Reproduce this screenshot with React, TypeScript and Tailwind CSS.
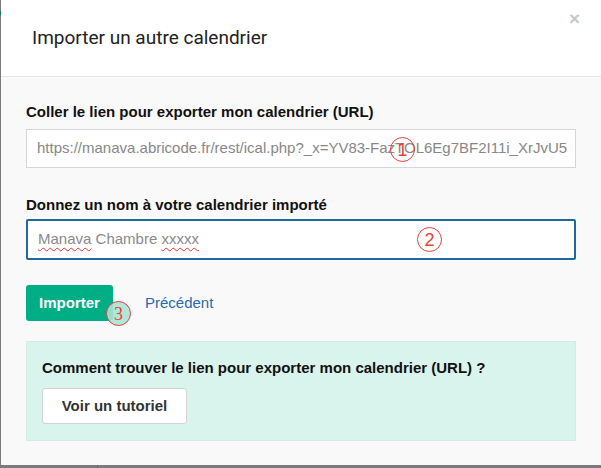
import React from "react";

function Circle({ n, className }: { n: string; className: string }) {
  return (
    <div
      className={`absolute flex h-[25px] w-[25px] items-center justify-center rounded-full border-[1.5px] border-[#e8413c] text-[18px] leading-none text-[#e8413c] ${className}`}
      style={{ fontFamily: '"Liberation Sans", Arial, sans-serif' }}
    >
      {n}
    </div>
  );
}

export default function App() {
  const sans = { fontFamily: '"Liberation Sans", Arial, sans-serif' };
  return (
    <div className="flex h-[468px] w-[601px] flex-col overflow-hidden bg-[#7b7b7b]" style={sans}>
      <div className="flex min-h-0 flex-1">
        <div className="relative w-[1px] bg-[#7b7b7b]">
          <div className="absolute left-0 top-[11px] h-[4px] w-[1px] bg-[#0f7a5a]" />
        </div>
        <div className="flex flex-1 flex-col bg-[#f9f9f9]">
          {/* header */}
          <div className="relative flex h-[77px] items-center border-b border-[#e5e5e5] bg-white pl-[31px]">
            <h1
              className="text-[19px] font-normal text-[#222]"
              style={{ fontFamily: 'Roboto, "Liberation Sans", sans-serif' }}
            >
              Importer un autre calendrier
            </h1>
            <span className="absolute right-[21px] top-[9px] text-[19px] font-bold leading-none text-[#c8c8c8]">
              ×
            </span>
          </div>
          {/* body */}
          <div className="flex flex-col px-[25px] pt-[26px]">
            <label className="text-[15px] font-bold leading-[18px] text-[#111]">
              Coller le lien pour exporter mon calendrier (URL)
            </label>
            <div className="relative mt-[8px] flex h-[39px] items-center overflow-hidden border border-[#d6d6d6] bg-white pl-[10px]">
              <span className="whitespace-nowrap text-[15px] text-[#888]">
                https://manava.abricode.fr/rest/ical.php?_x=YV83-FazTOL6Eg7BF2I11i_XrJvU5
              </span>
              <Circle n="1" className="left-[363px] top-[7px]" />
            </div>
            <label className="mt-[28px] text-[15px] font-bold leading-[18px] text-[#111]">
              Donnez un nom à votre calendrier importé
            </label>
            <div className="relative mt-[5px] flex h-[41px] items-center rounded-[2px] border-2 border-[#1d6a9b] bg-white pl-[10px]">
              <span className="whitespace-nowrap text-[15px] text-[#8a8a8a]">
                <span className="underline decoration-[#e03030] decoration-wavy decoration-1 underline-offset-[3px]">
                  Manava
                </span>{" "}
                Chambre{" "}
                <span className="underline decoration-[#e03030] decoration-wavy decoration-1 underline-offset-[3px]">
                  xxxxx
                </span>
              </span>
              <Circle n="2" className="left-[389px] top-[6px]" />
            </div>
            <div className="relative mt-[25px] flex items-center gap-[32px]">
              <button className="h-[36px] w-[87px] rounded-[3px] bg-[#00ae86] text-[15px] font-bold text-white">
                Importer
              </button>
              <span className="text-[15px] text-[#2a6aa8]">Précédent</span>
              <div
                className="absolute left-[80px] top-[16px] flex h-[25px] w-[25px] items-center justify-center rounded-full border-[1.5px] border-[#e8413c] bg-[#a8e3d4]/90 text-[18px] leading-none text-[#e8413c]"
                style={{ fontFamily: '"Liberation Serif", serif' }}
              >
                3
              </div>
            </div>
            <div className="mt-[20px] flex h-[100px] flex-col border border-[#d2ebe3] bg-[#d9f4ed] px-[15px] pt-[17px]">
              <p className="text-[15px] font-bold leading-[18px] text-[#111]">
                Comment trouver le lien pour exporter mon calendrier (URL) ?
              </p>
              <button className="mt-[11px] h-[36px] w-[145px] rounded-[3px] border border-[#d3d3d3] bg-white text-[15px] font-bold text-[#333]">
                Voir un tutoriel
              </button>
            </div>
          </div>
        </div>
      </div>
      <div className="flex h-[3px] shrink-0 bg-[#7b7b7b]">
        <div className="w-[97px]" />
        <div className="w-[1px] bg-[#666]" />
      </div>
    </div>
  );
}
